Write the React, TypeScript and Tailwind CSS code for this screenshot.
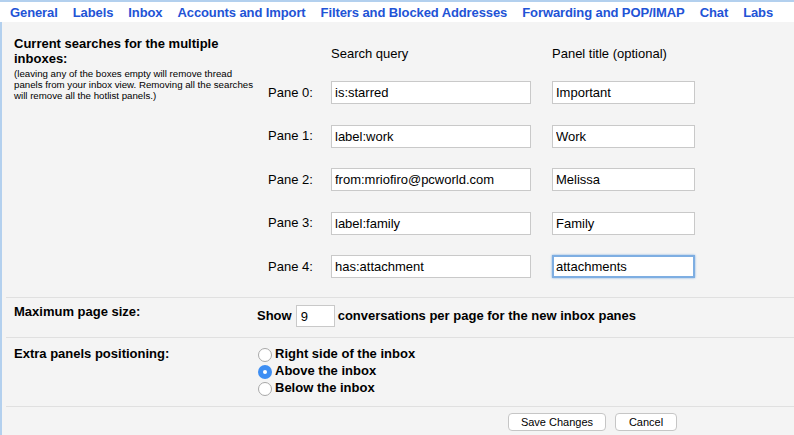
import { useState } from 'react';

const tabs = [
  'General',
  'Labels',
  'Inbox',
  'Accounts and Import',
  'Filters and Blocked Addresses',
  'Forwarding and POP/IMAP',
  'Chat',
  'Labs',
];

const panes = [
  { q: 'is:starred', t: 'Important' },
  { q: 'label:work', t: 'Work' },
  { q: 'from:mriofiro@pcworld.com', t: 'Melissa' },
  { q: 'label:family', t: 'Family' },
  { q: 'has:attachment', t: 'attachments' },
];

const positions = ['Right side of the inbox', 'Above the inbox', 'Below the inbox'];

const Radio = ({ checked }: { checked: boolean }) =>
  checked ? (
    <span className="w-[14px] h-[14px] rounded-full bg-[#3d8ef3] flex items-center justify-center shrink-0 mt-[3px]">
      <span className="w-[4px] h-[4px] rounded-full bg-white" />
    </span>
  ) : (
    <span className="w-[14px] h-[14px] rounded-full bg-white border border-[#a8a8a8] shrink-0 mt-[3px]" />
  );

const App = () => {
  const [pos, setPos] = useState(1);

  return (
    <div
      className="w-[794px] h-[435px] overflow-hidden bg-[#f4f4f4] border-t-2 border-[#b3d0ee] text-black"
      style={{ fontFamily: '"Liberation Sans", Arial, sans-serif' }}
    >
      {/* tabs */}
      <div className="h-[20px] bg-white flex items-center gap-[15px] pl-[10px] text-[13px] font-bold text-[#2253d6] leading-[15px] tracking-[-0.1px]">
        {tabs.map((t) => (
          <span key={t} className="whitespace-nowrap">
            {t}
          </span>
        ))}
      </div>

      <div className="border-l-2 border-[#b3d0ee] h-[413px]">
        {/* multiple inboxes */}
        <div className="ml-[4px] border-b border-[#e0e0e0] flex h-[276px]">
          <div className="w-[251px] pl-[8px] pt-[14px] shrink-0">
            <div className="text-[13px] font-bold leading-[15px] whitespace-nowrap">
              Current searches for the multiple
              <br />
              inboxes:
            </div>
            <div className="mt-[2px] text-[9.7px] leading-[11.2px] whitespace-nowrap">
              (leaving any of the boxes empty will remove thread
              <br />
              panels from your inbox view. Removing all the searches
              <br />
              will remove all the hotlist panels.)
            </div>
          </div>
          <div className="pt-[24px]">
            <div className="grid grid-cols-[74px_221px_143px] text-[13px] leading-[15px]">
              <div />
              <div>Search query</div>
              <div>Panel title (optional)</div>
            </div>
            <div className="mt-[20px] flex flex-col gap-[20.5px]">
              {panes.map((p, i) => (
                <div key={i} className="grid grid-cols-[74px_221px_143px] items-center text-[13px]">
                  <div className="pl-[11px]">Pane {i}:</div>
                  <input
                    readOnly
                    value={p.q}
                    className="w-[200px] h-[23px] bg-white border border-[#c9c9c9] px-[3px] text-[13px] outline-none"
                  />
                  <input
                    readOnly
                    value={p.t}
                    className={
                      i === 4
                        ? 'w-[143px] h-[23px] bg-white border-2 border-[#7eaee2] px-[2px] text-[13px] outline-none shadow-[0_0_2px_#7eaee2]'
                        : 'w-[143px] h-[23px] bg-white border border-[#c9c9c9] px-[3px] text-[13px] outline-none'
                    }
                  />
                </div>
              ))}
            </div>
          </div>
        </div>

        {/* max page size */}
        <div className="ml-[4px] border-b border-[#e0e0e0] flex h-[40px] pt-[6px]">
          <div className="w-[251px] pl-[8px] shrink-0 text-[13px] font-bold leading-[15px]">Maximum page size:</div>
          <div className="flex items-center text-[13px] font-bold h-[22px] mt-[1px]">
            <span>Show</span>
            <input
              readOnly
              value="9"
              className="ml-[4px] mr-[3px] w-[39px] h-[22px] bg-white border border-[#c9c9c9] px-[4px] font-normal text-[13px] outline-none"
            />
            <span className="whitespace-nowrap">conversations per page for the new inbox panes</span>
          </div>
        </div>

        {/* positioning */}
        <div className="ml-[4px] border-b border-[#e0e0e0] flex h-[69px] pt-[8px]">
          <div className="w-[251px] pl-[8px] shrink-0 text-[13px] font-bold leading-[15px]">Extra panels positioning:</div>
          <div className="flex flex-col pl-[1px] -mt-[1px]">
            {positions.map((p, i) => (
              <label
                key={p}
                className="flex items-start gap-[3px] text-[13px] font-bold leading-[17px] cursor-default"
                onClick={() => setPos(i)}
              >
                <Radio checked={pos === i} />
                <span>{p}</span>
              </label>
            ))}
          </div>
        </div>

        {/* buttons */}
        <div className="ml-[4px] pl-[502px] pt-[6px] flex gap-[9px]">
          <button className="w-[98px] h-[18px] bg-white border border-[#c6c6c6] rounded-[4px] text-[11px] leading-[16px]">
            Save Changes
          </button>
          <button className="w-[62px] h-[18px] bg-white border border-[#c6c6c6] rounded-[4px] text-[11px] leading-[16px]">
            Cancel
          </button>
        </div>
      </div>
    </div>
  );
};

export default App;
